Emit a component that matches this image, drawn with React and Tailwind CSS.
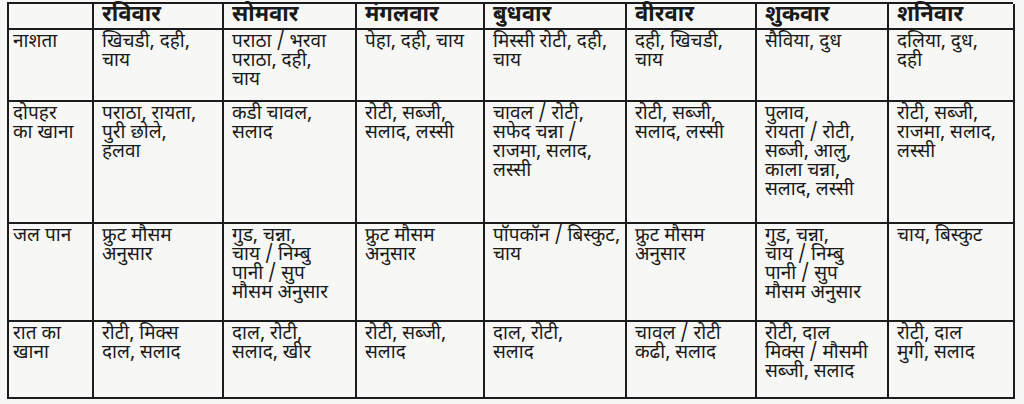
const days = ['रविवार', 'सोमवार', 'मंगलवार', 'बुधवार', 'वीरवार', 'शुकवार', 'शनिवार']

const rows = [
  {
    label: ['नाशता'],
    height: 'h-[72px]',
    cells: [
      ['खिचडी, दही,', 'चाय'],
      ['पराठा / भरवा', 'पराठा, दही,', 'चाय'],
      ['पेहा, दही, चाय'],
      ['मिस्सी रोटी, दही,', 'चाय'],
      ['दही, खिचडी,', 'चाय'],
      ['सैविया, दुध'],
      ['दलिया, दुध,', 'दही'],
    ],
  },
  {
    label: ['दोपहर', 'का खाना'],
    height: 'h-[122px]',
    cells: [
      ['पराठा, रायता,', 'पुरी छोले,', 'हलवा'],
      ['कडी चावल,', 'सलाद'],
      ['रोटी, सब्जी,', 'सलाद, लस्सी'],
      ['चावल / रोटी,', 'सफेद चन्ना /', 'राजमा, सलाद,', 'लस्सी'],
      ['रोटी, सब्जी,', 'सलाद, लस्सी'],
      ['पुलाव,', 'रायता / रोटी,', 'सब्जी, आलु,', 'काला चन्ना,', 'सलाद, लस्सी'],
      ['रोटी, सब्जी,', 'राजमा, सलाद,', 'लस्सी'],
    ],
  },
  {
    label: ['जल पान'],
    height: 'h-[98px]',
    cells: [
      ['फ्रुट मौसम', 'अनुसार'],
      ['गुड, चन्ना,', 'चाय / निम्बु', 'पानी / सुप', 'मौसम अनुसार'],
      ['फ्रुट मौसम', 'अनुसार'],
      ['पॉपकॉन / बिस्कुट,', 'चाय'],
      ['फ्रुट मौसम', 'अनुसार'],
      ['गुड, चन्ना,', 'चाय / निम्बु', 'पानी / सुप', 'मौसम अनुसार'],
      ['चाय, बिस्कुट'],
    ],
  },
  {
    label: ['रात का', 'खाना'],
    height: 'h-[77px]',
    cells: [
      ['रोटी, मिक्स', 'दाल, सलाद'],
      ['दाल, रोटी,', 'सलाद, खीर'],
      ['रोटी, सब्जी,', 'सलाद'],
      ['दाल, रोटी,', 'सलाद'],
      ['चावल / रोटी', 'कढी, सलाद'],
      ['रोटी, दाल', 'मिक्स / मौसमी', 'सब्जी, सलाद'],
      ['रोटी, दाल', 'मुगी, सलाद'],
    ],
  },
]

function Cell({ lines, className = '' }) {
  return (
    <div className={`border-r-2 border-b-2 border-[#1c1c1c] pt-[3px] leading-[19px] ${className}`}>
      {lines.map((l, i) => (
        <div key={i} className="whitespace-nowrap">{l}</div>
      ))}
    </div>
  )
}

export default function App() {
  return (
    <div
      className="w-[1024px] h-[404px] overflow-hidden bg-[#f7f7f5] text-[#1a1a1a] pl-[7px] pt-[2px]"
      style={{ fontFamily: '"Noto Sans Devanagari", "Lohit Devanagari", "Noto Sans", "Mangal", sans-serif' }}
    >
      <div className="grid grid-cols-[85px_130px_133px_128px_142px_130px_132px_126px] w-[1006px] border-l-2 border-t-2 border-[#1c1c1c] text-[19px]">
        {/* header */}
        <div className="h-[26px] border-r-2 border-b-2 border-[#1c1c1c]" />
        {days.map(d => (
          <div key={d} className="h-[26px] border-r-2 border-b-2 border-[#1c1c1c] pl-[8px] text-[22px] font-bold leading-[24px]">
            {d}
          </div>
        ))}

        {rows.map(row => (
          <div key={row.label.join()} className="contents">
            <Cell lines={row.label} className={`${row.height} pl-[4px]`} />
            {row.cells.map((c, i) => (
              <Cell key={i} lines={c} className={`${row.height} pl-[8px]`} />
            ))}
          </div>
        ))}
      </div>
    </div>
  )
}
